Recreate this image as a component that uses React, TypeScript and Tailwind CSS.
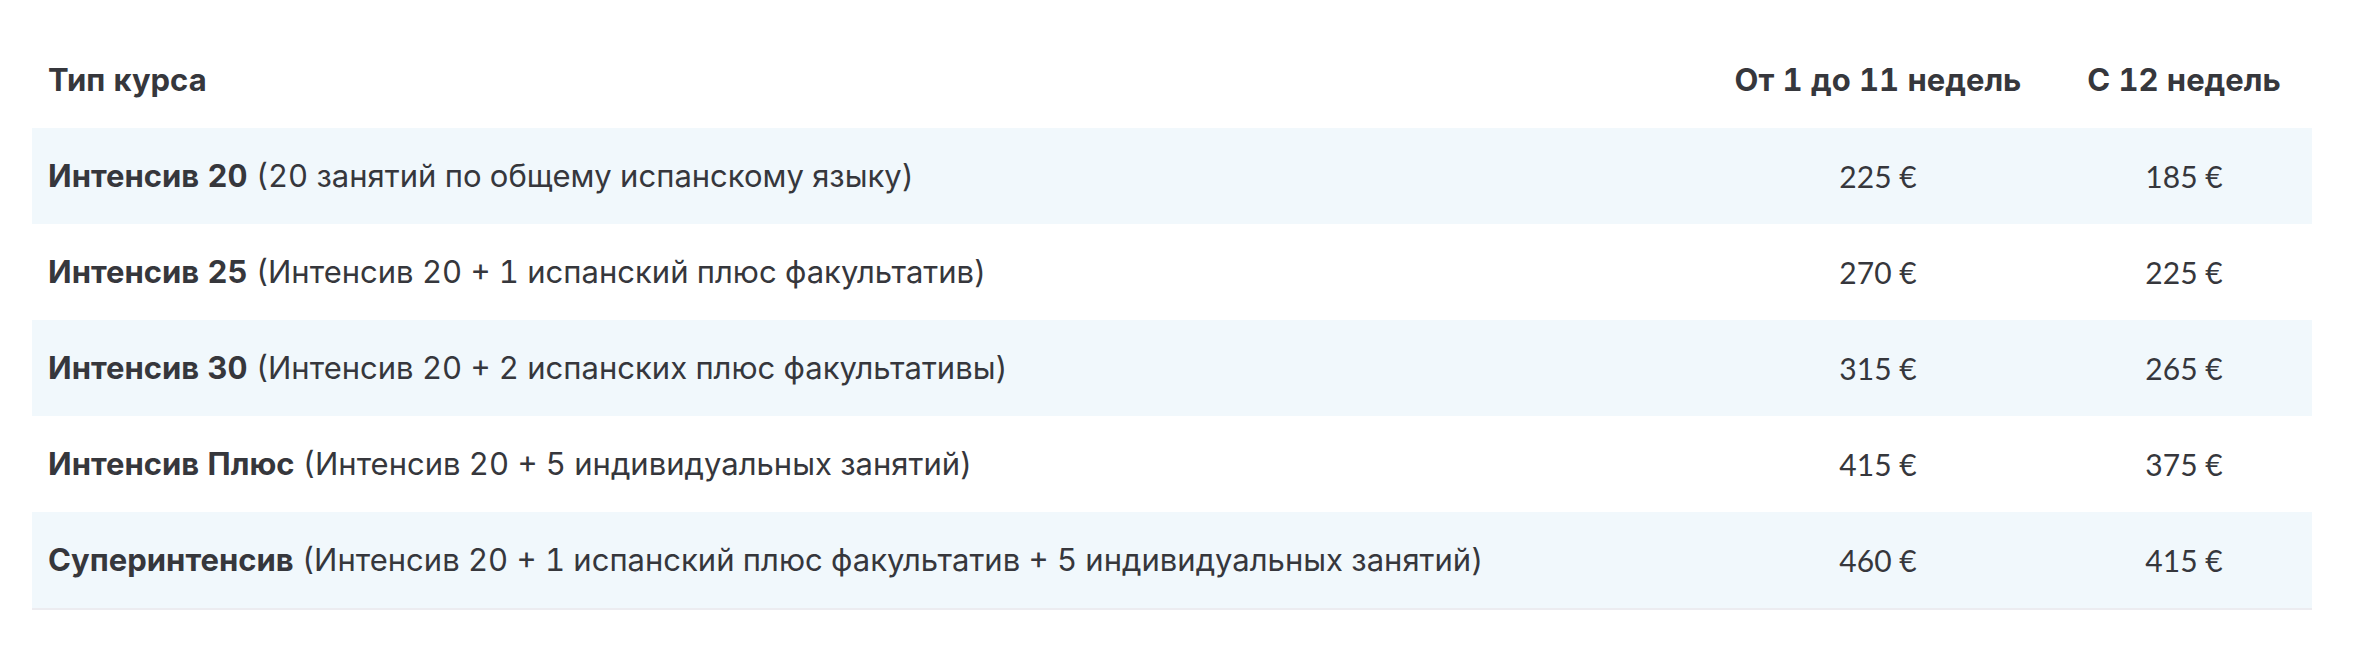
const rows = [
  { name: "Интенсив 20", note: "(20 занятий по общему испанскому языку)", a: "225 €", b: "185 €" },
  { name: "Интенсив 25", note: "(Интенсив 20 + 1 испанский плюс факультатив)", a: "270 €", b: "225 €" },
  { name: "Интенсив 30", note: "(Интенсив 20 + 2 испанских плюс факультативы)", a: "315 €", b: "265 €" },
  { name: "Интенсив Плюс", note: "(Интенсив 20 + 5 индивидуальных занятий)", a: "415 €", b: "375 €" },
  {
    name: "Суперинтенсив",
    note: "(Интенсив 20 + 1 испанский плюс факультатив + 5 индивидуальных занятий)",
    a: "460 €",
    b: "415 €",
  },
];

export default function App() {
  return (
    <div className="w-[2358px] h-[660px] bg-white pt-8 pl-8 font-['Inter',sans-serif] text-[31px] tabular-nums text-[#36373c]">
      <div className="w-[2280px] border-b-2 border-[#ececf0]">
        {/* Header */}
        <div className="grid grid-cols-[1fr_356px_256px] h-24 items-center font-bold">
          <div className="px-4">Тип курса</div>
          <div className="text-center">От 1 до 11 недель</div>
          <div className="text-center">С 12 недель</div>
        </div>

        {/* Rows */}
        {rows.map((r, i) => (
          <div
            key={r.name}
            className={`grid grid-cols-[1fr_356px_256px] h-24 items-center ${i % 2 === 0 ? "bg-[#f1f8fc]" : "bg-white"}`}
          >
            <div className="px-4">
              <span className="font-bold">{r.name}</span> {r.note}
            </div>
            <div className="text-center font-['Lato',sans-serif] text-[30px]">{r.a}</div>
            <div className="text-center font-['Lato',sans-serif] text-[30px]">{r.b}</div>
          </div>
        ))}
      </div>
    </div>
  );
}
